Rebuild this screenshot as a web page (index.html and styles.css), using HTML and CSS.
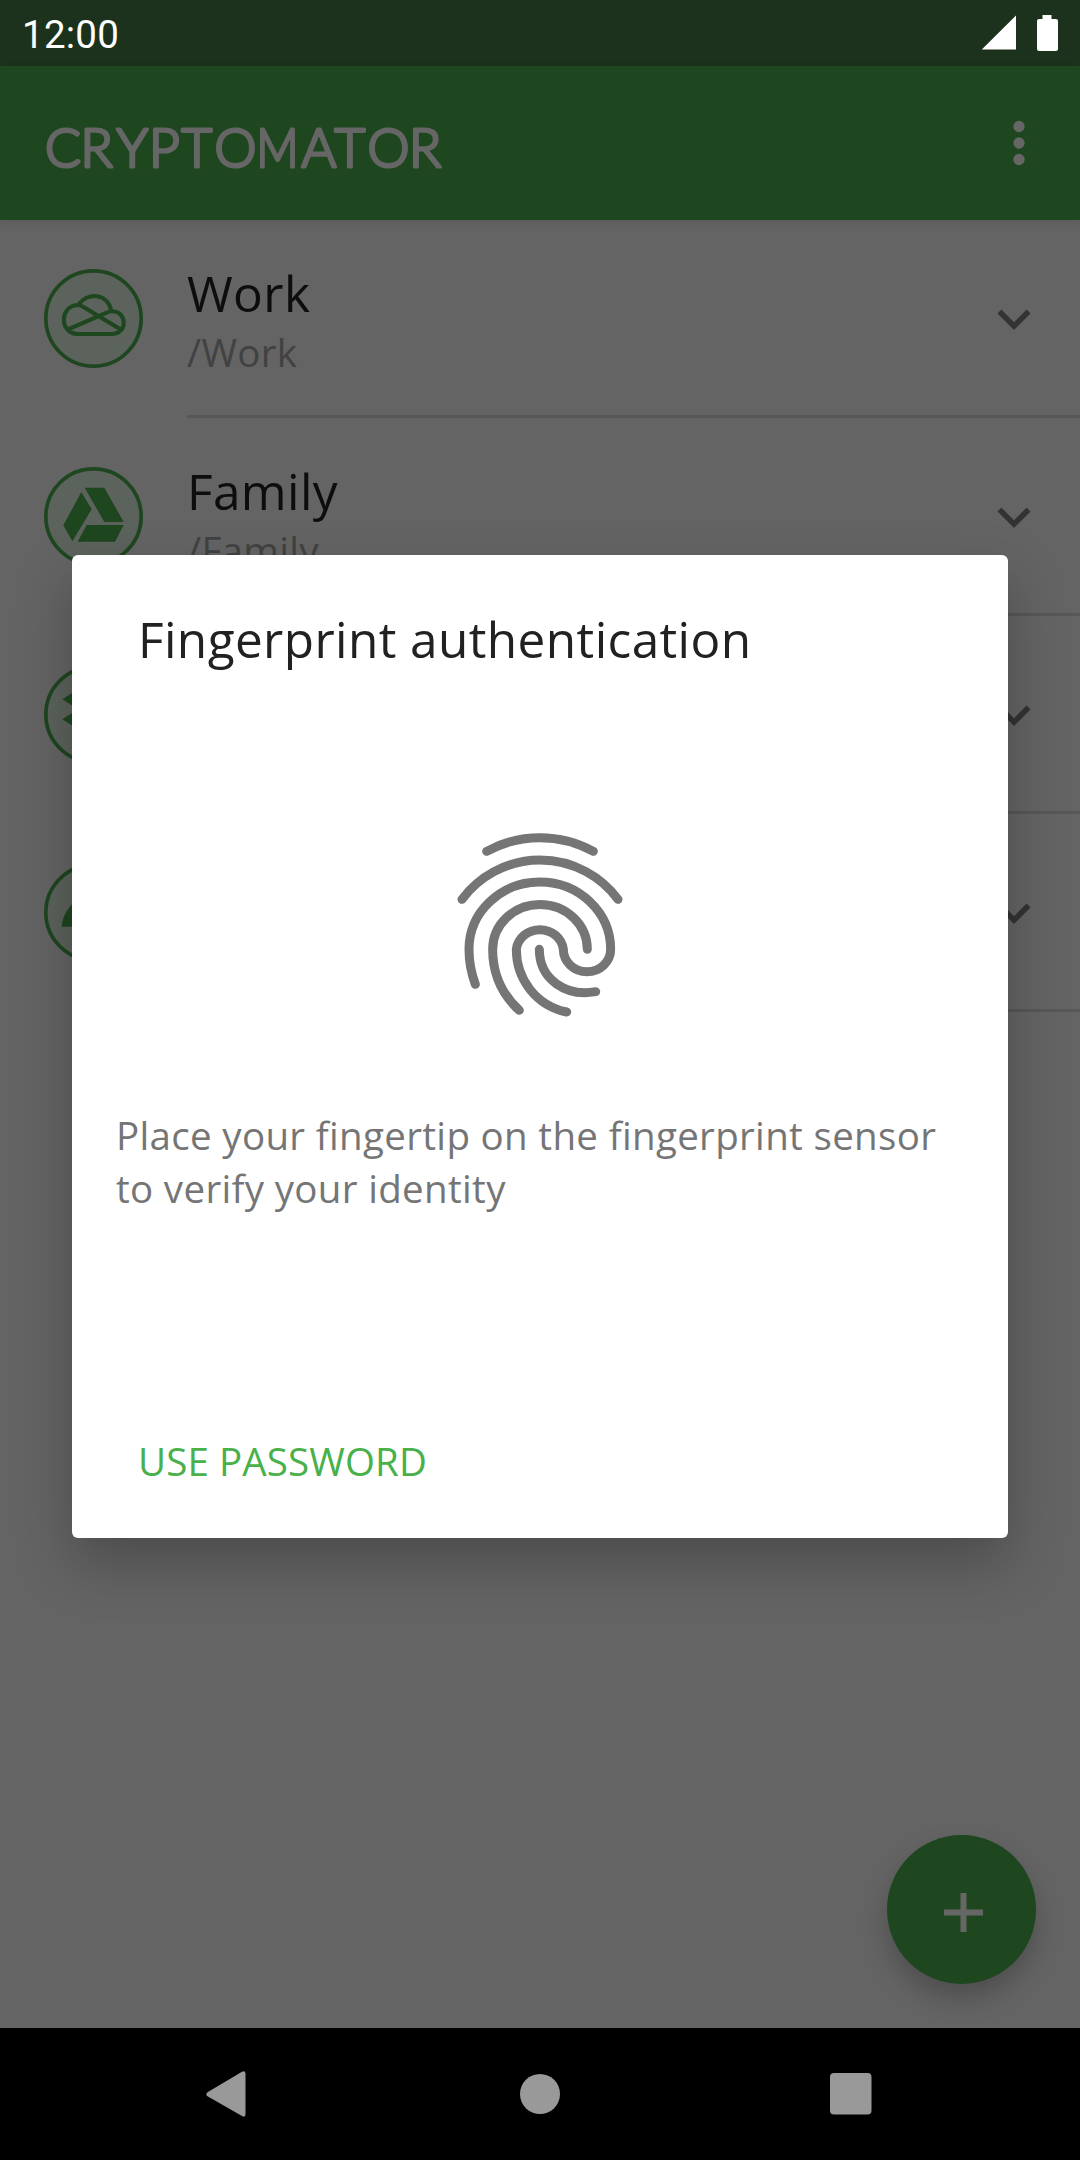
FILE: index.html
```html
<!DOCTYPE html>
<html lang="en">
<head>
<meta charset="utf-8">
<title>Cryptomator</title>
<link rel="stylesheet" href="styles.css">
</head>
<body>
<div class="screen">
  <header class="status">
    <span class="clock">12:00</span>
    <svg class="status-icons" width="76" height="36" viewBox="0 0 76 36"><path d="M0 34.5V34.3L34 .5V34.5zM60.500 0h9v4h4.500q2 0 2 2v28q0 2-2 2h-17q-2 0-2-2V6q0-2 2-2h3.500z"/></svg>
  </header>
  <div class="toolbar">
    <svg class="brand" width="410" height="60" viewBox="0 0 410 60"><text y="46.500" x="1 36.500 72.500 105 137.500 170.500">CRYPTO</text><text transform="translate(212.500 46.500) scale(.87 1)">M</text><text y="46.500" x="257.500 290.500 323.500 365">ATOR</text></svg>
    <svg class="more" width="66" height="66" viewBox="0 0 24 24"><circle cx="12" cy="6" r="2.050"/><circle cx="12" cy="12" r="2.050"/><circle cx="12" cy="18" r="2.050"/></svg>
  </div>
  <main class="vaults">
    <div class="vault">
      <svg class="cloud" viewBox="132 117 297 297"><circle class="ring" cx="280.500" cy="265.500" r="143"/><path class="line" d="M338 312H232C178 310 178 229 232 225Q241 224 252 232L366 301M338 312C383 310 382 246 338 244Q330 243 320 248L204 298M236 224C260 186 324 188 334 243"/></svg>
      <div class="info"><div class="name">Work</div><div class="path">/Work</div></div>
      <svg class="chevron" viewBox="0 0 24 24"><path d="M7.410 7.840L12 12.420l4.590-4.580L18 9.250l-6 6-6-6z"/></svg>
    </div>
    <div class="vault">
      <svg class="cloud" viewBox="132 711 297 297"><circle class="ring" cx="280.500" cy="859.500" r="143"/><path d="M254 773H313L371 876H313zM244 786L275 838 217 934 190 886zM260 885H371L345 935H233z"/></svg>
      <div class="info"><div class="name">Family</div><div class="path">/Family</div></div>
      <svg class="chevron" viewBox="0 0 24 24"><path d="M7.410 7.840L12 12.420l4.590-4.580L18 9.250l-6 6-6-6z"/></svg>
    </div>
    <div class="vault">
      <svg class="cloud" viewBox="0 0 297 297"><circle class="ring" cx="148.500" cy="148.500" r="143"/><path d="M102 73L149 103 102 133 55 103zM195 73L242 103 195 133 149 103zM102 133L149 163 102 193 55 163zM195 133L242 163 195 193 149 163zM149 174L195 203 149 232 102 203z"/></svg>
      <div class="info"></div>
      <svg class="chevron" viewBox="0 0 24 24"><path d="M7.410 7.840L12 12.420l4.590-4.580L18 9.250l-6 6-6-6z"/></svg>
    </div>
    <div class="vault">
      <svg class="cloud" viewBox="0 0 297 297"><circle class="ring" cx="148.500" cy="148.500" r="143"/><path d="M53 191C56 160 69 138 86 122A95 95 0 0 1 244 191z"/></svg>
      <div class="info"></div>
      <svg class="chevron" viewBox="0 0 24 24"><path d="M7.410 7.840L12 12.420l4.590-4.580L18 9.250l-6 6-6-6z"/></svg>
    </div>
    <div class="fab"><svg width="39" height="39" viewBox="0 0 39 39"><path d="M16.500 0h6v16.500H39v6H22.500V39h-6V22.500H0v-6h16.500z"/></svg></div>
  </main>
  <nav class="navbar">
    <svg width="40" height="46" viewBox="0 0 40 46"><path d="M36 .8Q39.500-1 39.500 3V43Q39.500 47 36 45L1.500 25.300Q-.8 23.500 1.500 21.300z"/></svg>
    <svg class="home" width="40" height="40" viewBox="0 0 40 40"><circle cx="20" cy="20" r="20"/></svg>
    <svg width="42" height="42" viewBox="0 0 42 42"><rect width="41.500" height="41.500" rx="4"/></svg>
  </nav>
  <section class="dialog">
    <h1 class="title">Fingerprint authentication</h1>
    <svg class="finger" width="220" height="230" viewBox="0 0 660 690"><path d="M170 124A332.700 332.700 0 0 1 490 124M96 268A291 291 0 0 1 564 268M136 523Q117 472 117 418A212.500 202 0 0 1 542 418A70.500 67 0 0 1 400 418A71 67 0 0 0 259 418C259 508 318 586 410 606M268 601C215 553 188 490 188 418A141.500 134 0 0 1 472 418M328 418C328 510 410 561 497 545"/></svg>
    <p class="hint">Place your fingertip on the fingerprint sensor<br>to verify your identity</p>
    <div class="action">USE PASSWORD</div>
  </section>
</div>
</body>
</html>
```
FILE: styles.css
```css
* { box-sizing: border-box; margin: 0; }
body { background: #646464; font-family: "Open Sans", sans-serif; }
svg { display: block; flex: none; }
.screen { position: relative; display: flex; flex-direction: column; width: 1080px; height: 2160px; overflow: hidden; background: #646464; }
.status { display: flex; justify-content: space-between; height: 66px; padding: 15px 22px 0; background: #1c321c; color: #fff; }
.clock { font: 38.5px/40px Roboto, sans-serif; letter-spacing: .25px; }
.status-icons { fill: #fff; }
.toolbar { display: flex; justify-content: space-between; height: 154px; padding: 44px 28px 0 44px; background: #1e461f; box-shadow: 0 2px 10px rgba(0,0,0,.12); }
.brand { margin-top: 10px; overflow: visible; }
.brand text { font: 300 53px Lato, sans-serif; fill: #666; stroke: #666; stroke-width: 3.2px; stroke-linejoin: round; }
.more { fill: #666; }
.vaults { position: relative; flex: 1; }
.vault { display: flex; height: 198px; padding-left: 44px; }
.cloud { width: 99px; height: 99px; margin: 49px 44px 0 0; fill: #1e461f; }
.ring { fill: #5c625c; stroke: #1e461f; stroke-width: 11; }
.line { fill: none; stroke: #1e461f; stroke-width: 12; }
.info { flex: 1; padding-top: 40px; border-bottom: 3px solid #575757; }
.name { font-size: 49.5px; line-height: 66px; letter-spacing: .4px; color: #0d0d0d; }
.path { font-size: 38.5px; line-height: 52px; letter-spacing: .3px; color: #424242; }
.chevron { width: 99px; height: 198px; padding: 68px 33px 61px 0; border-bottom: 3px solid #575757; fill: #333; }
.fab { position: absolute; right: 44px; bottom: 44px; width: 149px; height: 149px; padding: 57.5px 0 0 57px; border-radius: 50%; background: #1e461f; box-shadow: 0 14px 26px rgba(0,0,0,.22); }
.fab svg { fill: #666; }
.navbar { display: flex; justify-content: space-between; align-items: center; height: 132px; padding: 0 208px 0 206px; background: #000; fill: #999; }
.home { margin-left: 4px; }
.dialog { position: absolute; left: 72px; top: 555px; display: flex; flex-direction: column; width: 936px; height: 983px; padding: 51px 44px 0; border-radius: 6px; background: #fff; box-shadow: 0 24px 56px rgba(0,0,0,.25); }
.title { padding-left: 22px; font-size: 49.5px; line-height: 67px; font-weight: 400; letter-spacing: .41px; color: #212121; }
.finger { margin: 137px 0 0 314px; fill: none; stroke: #757575; stroke-width: 27; stroke-linecap: round; }
.hint { margin-top: 69px; font-size: 38.5px; line-height: 53px; letter-spacing: .33px; color: #757575; }
.action { margin-top: 220px; padding-left: 22px; font-size: 38.5px; line-height: 52px; letter-spacing: .12px; color: #49b04a; }
```
